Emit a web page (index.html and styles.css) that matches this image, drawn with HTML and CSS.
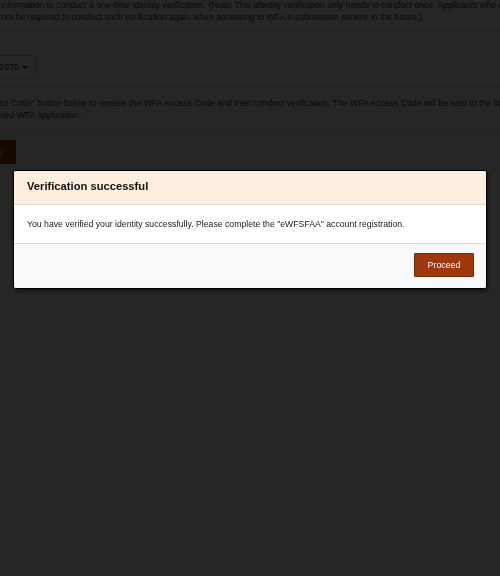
FILE: index.html
```html
<!DOCTYPE html>
<html lang="en">
<head>
    <meta charset="UTF-8">
    <meta name="viewport" content="width=device-width, initial-scale=1.0">
    <title>Identity Verification</title>
    <link rel="stylesheet" href="styles.css">
</head>
<body>
    <div class="page">
        <p class="note first">information to conduct a one-time identity verification. (Note: This identity verification only needs to conduct once. Applicants who completed it will<br>not be required to conduct such verification again when accessing to WFA e-submission service in the future.)</p>
        <hr>
        <div class="field">
            <div class="select">01/01/1970<span class="caret"></span></div>
        </div>
        <hr>
        <p class="note second">Please click the "Get WFA Access Code" button below to receive the WFA Access Code and then conduct verification. The WFA Access Code will be sent to the login account of your<br>approved WFA application.</p>
        <hr>
        <div class="actions">
            <button class="btn">Get WFA Access Code</button>
        </div>
    </div>

    <div class="overlay">
        <div class="modal">
            <div class="modal-header">
                <h2>Verification successful</h2>
            </div>
            <div class="modal-body">
                You have verified your identity successfully. Please complete the "eWFSFAA" account registration.
            </div>
            <div class="modal-footer">
                <button class="btn">Proceed</button>
            </div>
        </div>
    </div>
</body>
</html>
```

FILE: styles.css
```css
body {
    margin: 0;
    font-family: "Liberation Sans", Arial, sans-serif;
    color: #333;
    background-color: #fff;
    overflow: hidden;
    height: 576px;
}
.page {
    width: 1000px;
}
.note {
    font-size: 8.7px;
    line-height: 12px;
    margin: 0;
    white-space: nowrap;
}
.first {
    margin-top: -1px;
    margin-left: 1px;
    padding-bottom: 8px;
}
.second {
    margin-left: -22px;
    text-indent: -100px;
    padding: 9px 0 10px;
}
hr {
    border: 0;
    border-top: 1px solid #ddd;
    margin: 0;
}
.field {
    padding: 23px 0 8px;
    margin-left: -64px;
}
.select {
    width: 100px;
    height: 24px;
    line-height: 22px;
    border: 1px solid #ccc;
    border-radius: 3px;
    font-size: 9px;
    text-align: right;
    padding-right: 7px;
    box-sizing: border-box;
}
.caret {
    display: inline-block;
    margin-left: 3px;
    vertical-align: middle;
    border-top: 3px solid #333;
    border-left: 3px solid transparent;
    border-right: 3px solid transparent;
}
.actions {
    padding-top: 8px;
    margin-left: -99px;
}
.btn {
    font-family: "Liberation Sans", Arial, sans-serif;
    font-size: 8.8px;
    color: #fff;
    background-color: #a0380e;
    border: 1px solid #7a2a08;
    border-radius: 1px;
    height: 24px;
    padding: 0 12px;
}
.overlay {
    position: fixed;
    top: 0;
    left: 0;
    right: 0;
    bottom: 0;
    background-color: rgba(0, 0, 0, 0.85);
}
.modal {
    width: 472px;
    margin: 170px 0 0 13px;
    background-color: #fff;
    border: 1px solid #000;
    border-radius: 3px;
    overflow: hidden;
    box-shadow: 1px 2px 4px rgba(0, 0, 0, 0.6);
}
.modal-header {
    background-color: #fdeee0;
    border-bottom: 1px solid #e2d6c2;
    padding: 7px 13px 10px;
}
.modal-header h2 {
    margin: 0;
    font-size: 11.2px;
    line-height: 16px;
    color: #111;
}
.modal-body {
    font-size: 8.7px;
    line-height: 12px;
    color: #1a1a1a;
    padding: 13px 13px;
    border-bottom: 1px solid #d9d9d9;
}
.modal-footer {
    background-color: #f8f9fb;
    height: 44px;
    padding: 9px 12px 0;
    box-sizing: border-box;
    text-align: right;
}
.modal-footer .btn {
    width: 60px;
    padding: 0;
}
```
